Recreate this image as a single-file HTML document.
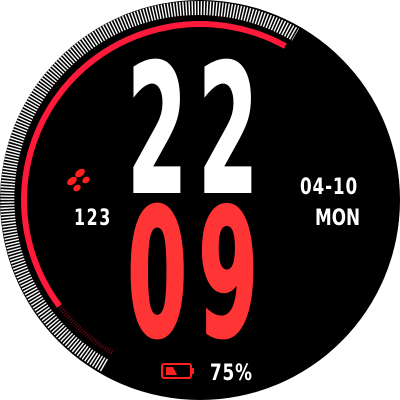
<!DOCTYPE html>
<html><head><style>
html,body{margin:0;padding:0;background:#fff;width:400px;height:400px;overflow:hidden}
svg{display:block}
text{font-family:"DejaVu Sans Condensed","DejaVu Sans","Liberation Sans",sans-serif;font-weight:bold}
</style></head><body>
<svg width="400" height="400" viewBox="0 0 400 400">
<circle cx="200" cy="200" r="200" fill="#000"/>
<path d="M104.5 365.4 A191 191 0 1 1 295.5 34.6" fill="none" stroke="#fff" stroke-width="14" stroke-dasharray="1.4 1.6"/>
<path d="M112 352.4 A176 176 0 0 1 59.4 305.9" fill="none" stroke="#5a0a14" stroke-width="5" stroke-dasharray="1 1.5"/>
<path d="M59.4 305.9 A176 176 0 0 1 285.3 46.1" fill="none" stroke="#ff1a3c" stroke-width="6"/>
<g transform="translate(127,192) scale(0.53,0.98)">
<text x="0" y="0" font-size="182" fill="#fff" stroke="#fff" stroke-width="2" stroke-linejoin="miter" letter-spacing="20">22</text>
</g>
<g transform="translate(127,336) scale(0.53,0.98)">
<text x="0" y="0" font-size="182" fill="#ff3434" stroke="#ff3434" stroke-width="2" stroke-linejoin="miter" letter-spacing="20">09</text>
</g>
<g fill="#ff2020">
<ellipse cx="80" cy="173" rx="5.5" ry="3.5" transform="rotate(-35 80 173)"/>
<ellipse cx="72" cy="181" rx="5.5" ry="3.5" transform="rotate(-35 72 181)"/>
<ellipse cx="86" cy="180" rx="4" ry="3" transform="rotate(-35 86 180)"/>
<ellipse cx="77" cy="188" rx="4" ry="3" transform="rotate(-35 77 188)"/>
</g>
<text x="74" y="225" font-size="22" fill="#fff" font-weight="normal" letter-spacing="2" transform="translate(74 0) scale(0.8 1) translate(-74 0)">123</text>
<text x="300" y="194" font-size="22" fill="#fff" font-weight="normal" letter-spacing="1" transform="translate(300 0) scale(0.85 1) translate(-300 0)">04-10</text>
<text x="315" y="225" font-size="22" fill="#fff" font-weight="normal" transform="translate(315 0) scale(0.85 1) translate(-315 0)">MON</text>
<rect x="162" y="364" width="29" height="14" rx="2" fill="none" stroke="#ff2020" stroke-width="2"/>
<rect x="191" y="368" width="3" height="6" fill="#ff2020"/>
<path d="M166 367 H173 L177 375 H166 Z" fill="#ff2020"/>
<text x="210" y="380" font-size="22" fill="#fff" font-weight="normal" letter-spacing="1" transform="translate(210 0) scale(0.85 1) translate(-210 0)">75%</text>
</svg>
</body></html>
